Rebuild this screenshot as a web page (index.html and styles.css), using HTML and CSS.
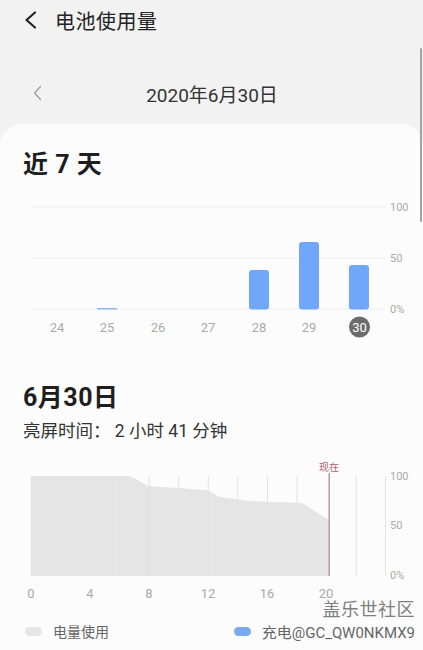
FILE: index.html
```html
<!DOCTYPE html>
<html lang="zh">
<head>
	<meta charset="UTF-8" />
	<title>电池使用量</title>
	<link rel="stylesheet" href="styles.css">
</head>
<body>
	<div class="page">
		<div class="topbar">
			<svg class="back" width="16" height="20" viewBox="0 0 16 20">
				<path d="M12 2.5 L3.5 10 L12 17.5" fill="none" stroke="#222" stroke-width="2.2" stroke-linecap="round" stroke-linejoin="round"/>
			</svg>
			<span class="title">电池使用量</span>
		</div>
		<div class="daterow">
			<svg class="prev" width="10" height="16" viewBox="0 0 10 16">
				<path d="M7.5 1.5 L1.5 8 L7.5 14.5" fill="none" stroke="#9a9a9a" stroke-width="1.2" stroke-linecap="round" stroke-linejoin="round"/>
			</svg>
			<span class="date">2020年6月30日</span>
		</div>
		<div class="card">
			<h2 class="head">近 7 天</h2>
			<svg class="chart" width="423" height="160" viewBox="0 0 423 160">
				<g stroke="#ececec" stroke-width="1">
					<line x1="32" y1="25" x2="385" y2="25"/>
					<line x1="32" y1="76" x2="385" y2="76"/>
					<line x1="32" y1="127" x2="385" y2="127"/>
				</g>
				<g class="axis">
					<text x="390" y="29">100</text>
					<text x="390" y="80">50</text>
					<text x="390" y="131">0%</text>
				</g>
				<g fill="#70a7fa">
					<rect x="97" y="126" width="20" height="1.5" fill="#8fb6e8"/>
					<rect x="249" y="88" width="20" height="39.5" rx="3"/>
					<rect x="299" y="60" width="20" height="67.5" rx="3"/>
					<rect x="349" y="83" width="20" height="44.5" rx="3"/>
				</g>
				<g class="days">
					<text x="57" y="150">24</text>
					<text x="107" y="150">25</text>
					<text x="158" y="150">26</text>
					<text x="208" y="150">27</text>
					<text x="259" y="150">28</text>
					<text x="309" y="150">29</text>
					<circle cx="359.5" cy="145" r="10.5" fill="#6c6c6c"/>
					<text x="359.5" y="150" class="today">30</text>
				</g>
			</svg>

			<h2 class="head day">6月30日</h2>
			<div class="screen">亮屏时间： 2 小时 41 分钟</div>

			<svg class="chart" width="423" height="176" viewBox="0 0 423 176">
				<polygon points="30.7,32 130,32 148,42 207,46 220,53 248,57 302,59 329,76 329,132 30.7,132" fill="#e5e5e5"/>
				<g stroke="#e2e2e2" stroke-width="1">
					<line x1="60.3" y1="32" x2="60.3" y2="132"/>
					<line x1="89.9" y1="32" x2="89.9" y2="132"/>
					<line x1="119.5" y1="32" x2="119.5" y2="132"/>
					<line x1="149.1" y1="32" x2="149.1" y2="132"/>
					<line x1="178.7" y1="32" x2="178.7" y2="132"/>
					<line x1="208.3" y1="32" x2="208.3" y2="132"/>
					<line x1="237.9" y1="32" x2="237.9" y2="132"/>
					<line x1="267.5" y1="32" x2="267.5" y2="132"/>
					<line x1="297.1" y1="32" x2="297.1" y2="132"/>
					<line x1="356.3" y1="32" x2="356.3" y2="132"/>
					<line x1="385.5" y1="32" x2="385.5" y2="132"/>
				</g>
				<line x1="329.2" y1="29" x2="329.2" y2="132" stroke="#b99aa0" stroke-width="1.5"/>
				<text x="329" y="27" class="now">现在</text>
				<g class="axis">
					<text x="390" y="36">100</text>
					<text x="390" y="85">50</text>
					<text x="390" y="135">0%</text>
				</g>
				<g class="days">
					<text x="31" y="154">0</text>
					<text x="90" y="154">4</text>
					<text x="149" y="154">8</text>
					<text x="208" y="154">12</text>
					<text x="267" y="154">16</text>
					<text x="326" y="154">20</text>
				</g>
				<text x="415" y="172" class="mark">盖乐世社区</text>
			</svg>

			<div class="legend">
				<div class="item"><span class="dot"></span>电量使用</div>
				<div class="item wide"><span class="dot blue"></span>充电@GC_QW0NKMX9</div>
			</div>
		</div>
		<div class="scroll"></div>
	</div>
</body>
</html>
```

FILE: styles.css
```css
html,body{
	margin:0;
	padding:0;
}
body{
	background:#f2f2f2;
	font-family:"Roboto","Noto Sans CJK SC",sans-serif;
	color:#222;
	overflow:hidden;
}
.page{
	position:relative;
	width:423px;
	height:650px;
	overflow:hidden;
}
.topbar{
	height:40px;
	display:flex;
	align-items:center;
	padding-left:23px;
	gap:16px;
}
.back{
	display:block;
}
.title{
	font-size:20px;
	color:#222;
	letter-spacing:0.5px;
}
.daterow{
	position:relative;
	height:56px;
	margin-top:25px;
	display:flex;
	align-items:center;
	justify-content:center;
}
.prev{
	position:absolute;
	left:33px;
	top:20px;
}
.date{
	font-size:19px;
	color:#333;
	margin-left:1px;
}
.card{
	margin-top:3px;
	background:#fcfcfc;
	border-radius:22px 22px 0 0;
	padding-top:24px;
	height:526px;
}
.head{
	margin:0;
	padding-left:23px;
	font-size:25px;
	line-height:34px;
	font-weight:bold;
	color:#1e1e1e;
	letter-spacing:0.5px;
}
.head.day{
	margin-top:39px;
}
.screen{
	padding-left:23px;
	margin-top:3px;
	font-size:17.5px;
	line-height:26px;
	color:#333;
}
.chart{
	display:block;
}
.axis text{
	font-size:11px;
	fill:#aaa;
}
.days text{
	font-size:13px;
	fill:#aaa;
	text-anchor:middle;
}
.days text.today{
	fill:#fff;
}
.now{
	font-size:10px;
	fill:#b0606e;
	text-anchor:middle;
}
.mark{
	font-size:18px;
	fill:#808080;
	text-anchor:end;
	letter-spacing:0.5px;
}
.legend{
	height:22px;
	display:flex;
	justify-content:space-between;
	align-items:center;
	padding:0 8px 0 25px;
}
.item{
	display:flex;
	align-items:center;
	gap:11px;
	font-size:14px;
	color:#666;
}
.item.wide{
	font-size:15px;
}
.dot{
	width:17px;
	height:9px;
	border-radius:5px;
	background:#e6e6e6;
}
.dot.blue{
	background:#79a9f1;
}
.scroll{
	position:absolute;
	right:1px;
	top:48px;
	width:2px;
	height:174px;
	background:#a3a3a3;
	border-radius:1px;
}
```
